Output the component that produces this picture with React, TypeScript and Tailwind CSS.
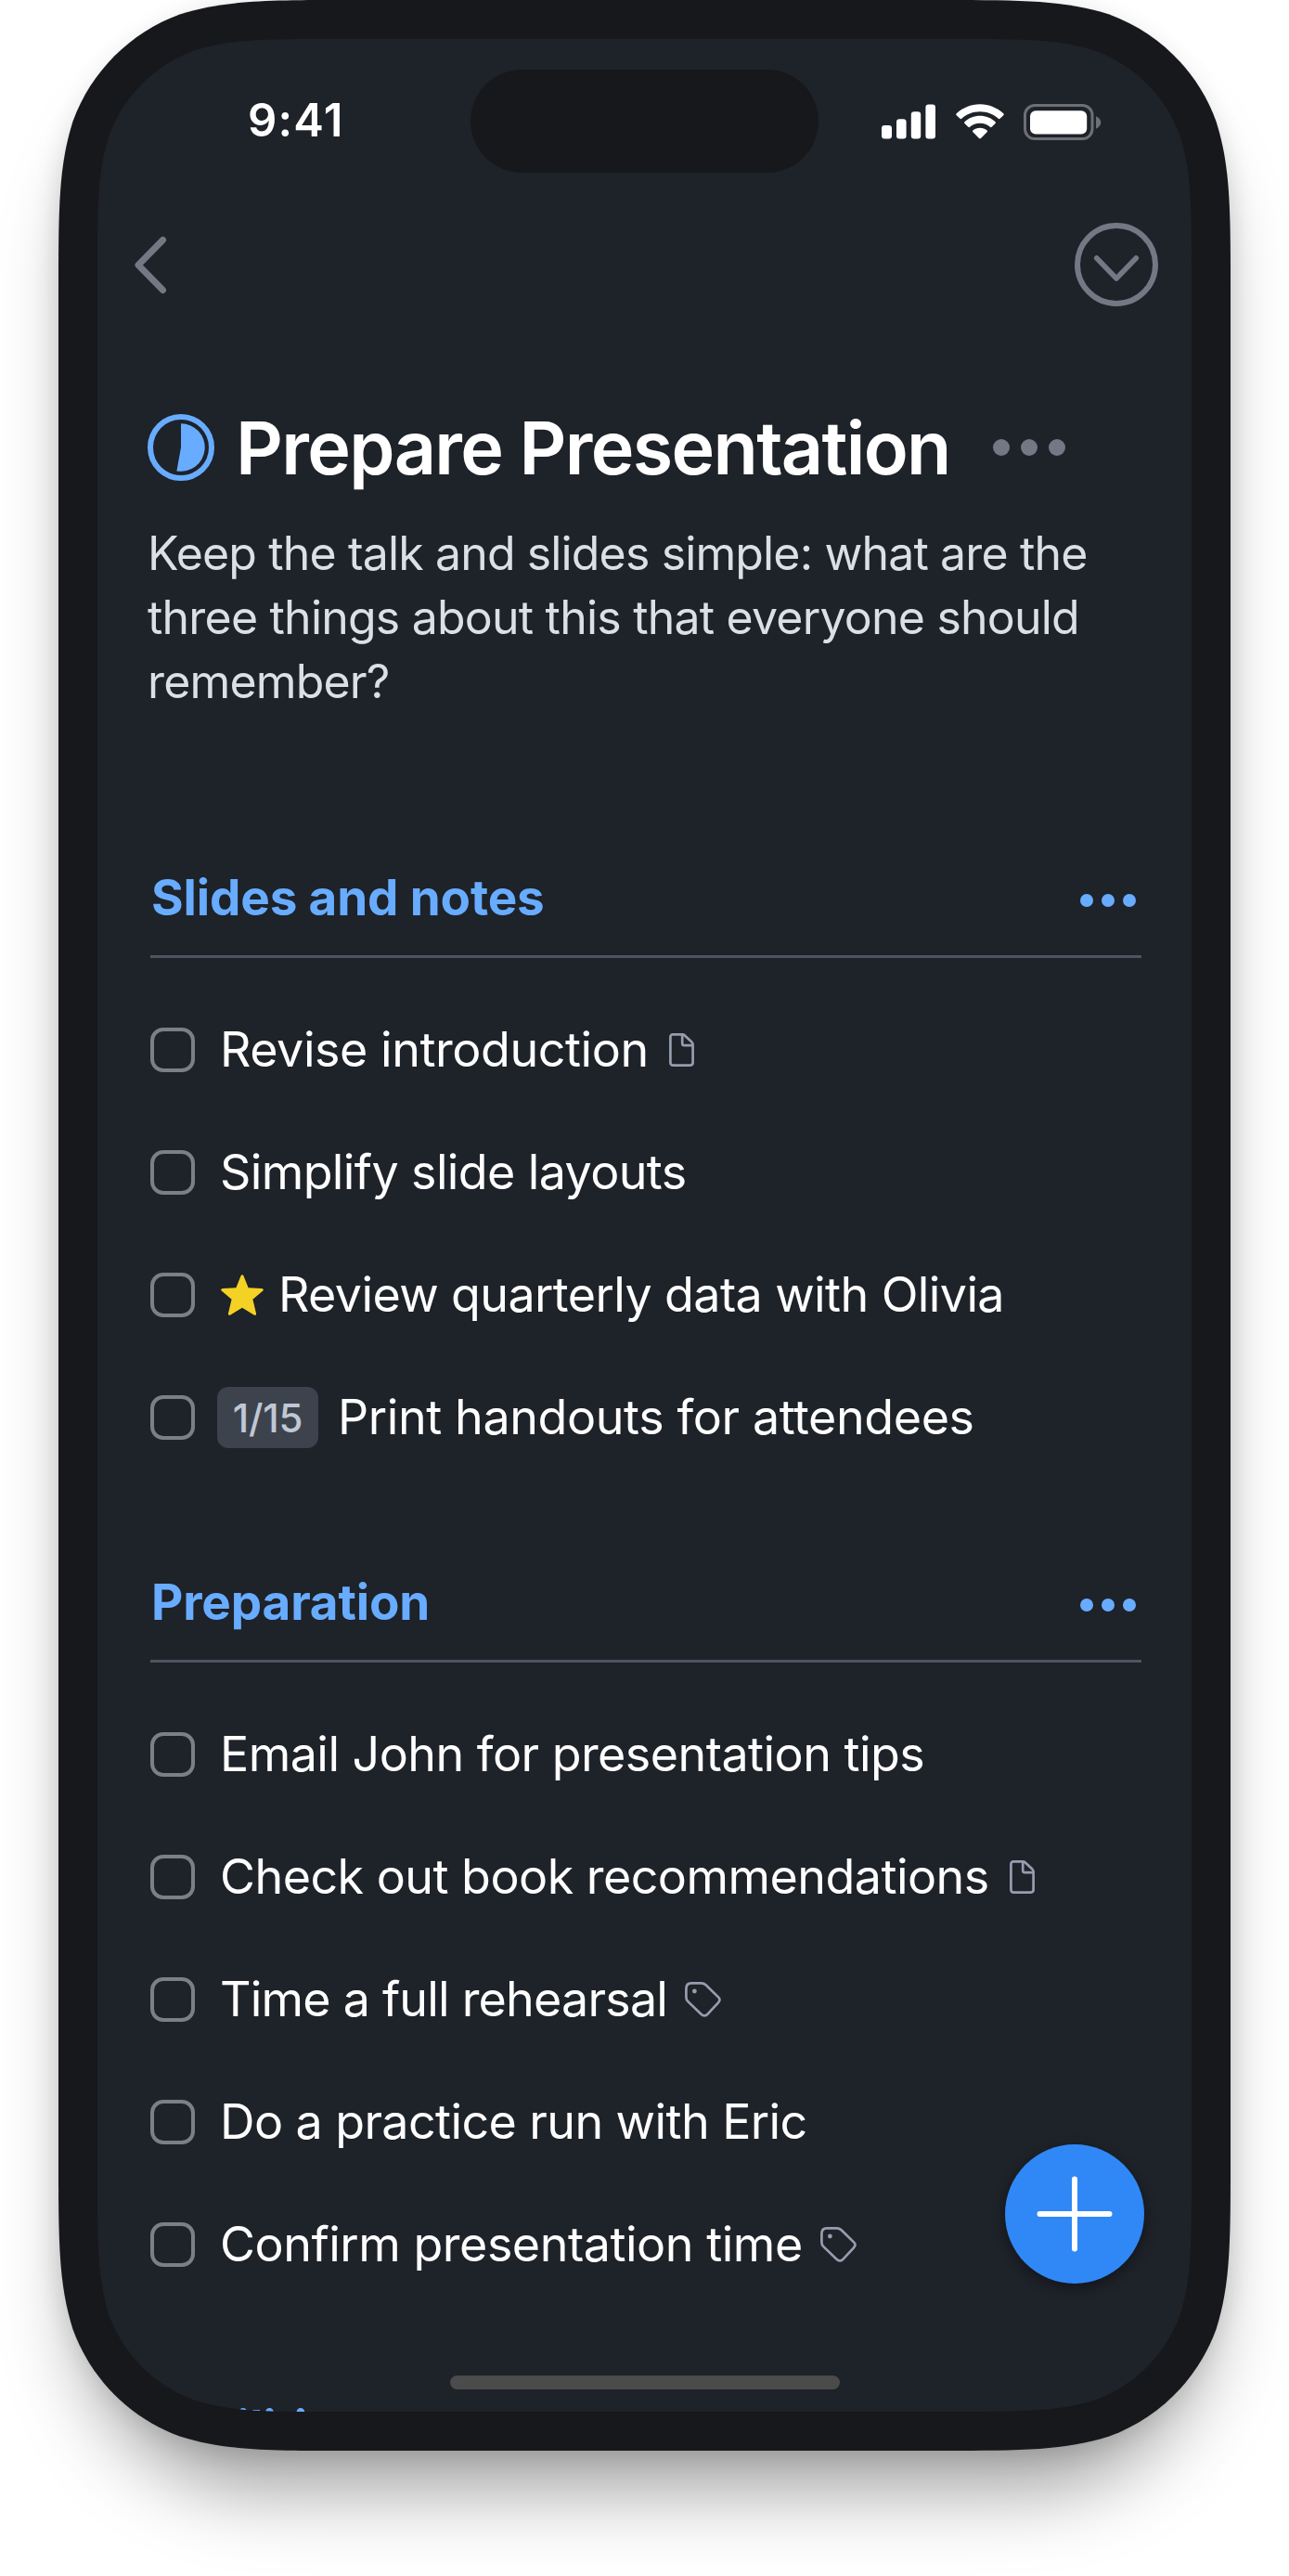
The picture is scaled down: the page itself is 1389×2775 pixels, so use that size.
import type { ReactNode } from "react";

type IconKind = "doc" | "tag";
type Task = {
  text: string;
  fit: string;
  icon?: IconKind;
  star?: boolean;
  badge?: string;
};

const slides: Task[] = [
  { text: "Revise introduction", fit: "tracking-[-0.45px]", icon: "doc" },
  { text: "Simplify slide layouts", fit: "tracking-[-0.62px]" },
  { text: "Review quarterly data with Olivia", fit: "tracking-[-0.61px]", star: true },
  { text: "Print handouts for attendees", fit: "tracking-[-0.41px]", badge: "1/15" },
];

const preparation: Task[] = [
  { text: "Email John for presentation tips", fit: "tracking-[-0.55px]" },
  { text: "Check out book recommendations", fit: "tracking-[-0.54px]", icon: "doc" },
  { text: "Time a full rehearsal", fit: "tracking-[-0.8px]", icon: "tag" },
  { text: "Do a practice run with Eric", fit: "tracking-[-0.6px]" },
  { text: "Confirm presentation time", fit: "tracking-[-0.48px]", icon: "tag" },
];

function DocIcon() {
  return (
    <svg className="ml-[22px] h-9 w-[27px] shrink-0" viewBox="0 0 27 36" fill="none" stroke="#959daf" strokeWidth="2.7" strokeLinejoin="round">
      <path d="M4 1.4H14.5C15.3 1.4 16 1.7 16.6 2.2L24.4 9.6C25.2 10.4 25.6 11.2 25.6 12.2V31.6C25.6 33.4 24.5 34.6 22.8 34.6H4.2C2.5 34.6 1.4 33.4 1.4 31.6V4.2C1.4 2.5 2.4 1.4 4 1.4Z" />
      <path d="M14.2 1.6V11C14.2 12.5 15 13.2 16.3 13.2H25.3" />
    </svg>
  );
}

function TagIcon() {
  return (
    <svg className="ml-[19px] h-[38px] w-[39px] shrink-0" viewBox="0 0 39 38" fill="none" stroke="#959daf" strokeWidth="2.7" strokeLinejoin="round">
      <path d="M7 1.4H17.5C19.6 1.4 21.1 1.9 22.6 3.3L36 16.4C38 18.3 38 20.3 36 22.3L24.6 34.6C22.5 37 19.8 37 17.5 34.8L3.6 21.4C2 19.9 1.4 18.5 1.4 16.4V7.4C1.4 3.5 3.4 1.4 7 1.4Z" />
      <circle cx="10.4" cy="10" r="2.4" fill="#959daf" stroke="none" />
    </svg>
  );
}

function Star() {
  return (
    <svg className="mr-[16px] ml-[1px] h-[44px] w-[46px] shrink-0" viewBox="0 0 46 44" fill="#f4d125">
      <path d="M21.6 1.3C22.2 -0.2 23.8 -0.2 24.4 1.3L29.6 14.2L43.9 15.1C45.9 15.2 46.3 16.7 45 17.8L34.4 26.8L38 41.8C38.4 43.6 37.1 44.3 35.6 43.4L23 35.7L10.4 43.4C8.9 44.3 7.6 43.6 8 41.8L11.6 26.8L1 17.8C-0.3 16.7 0.1 15.2 2.1 15.1L16.4 14.2Z" />
    </svg>
  );
}

function TaskRow({ task }: { task: Task }) {
  return (
    <li className="flex h-[132px] items-center">
      <span className="size-12 shrink-0 rounded-[14px] border-[4.5px] border-[#7b7f88]" />
      <div className="ml-[27px] flex items-center">
        {task.star && <Star />}
        {task.badge && (
          <span className="-ml-[3px] mr-[21px] flex h-[66px] w-[109px] shrink-0 items-center justify-center rounded-[12px] bg-[#3c434d] text-[42px] font-medium tracking-[-0.2px] text-[#c0c7d4]">
            {task.badge}
          </span>
        )}
        <span className={`whitespace-nowrap text-[52px] leading-[64px] text-white ${task.fit}`}>{task.text}</span>
        {task.icon === "doc" && <DocIcon />}
        {task.icon === "tag" && <TagIcon />}
      </div>
    </li>
  );
}

function SectionHead({ children }: { children: ReactNode }) {
  return (
    <header className="flex h-[118px] items-center justify-between border-b-[3px] border-[#4d5560]">
      <h2 className="ml-[1px] pb-[10px] text-[53px] leading-[64px] font-bold tracking-[-0.15px] text-[#68acff]">{children}</h2>
      <div className="mr-[6px] mb-[3px] flex gap-[9.25px]">
        <i className="size-[14px] rounded-full bg-[#68acff]" />
        <i className="size-[14px] rounded-full bg-[#68acff]" />
        <i className="size-[14px] rounded-full bg-[#68acff]" />
      </div>
    </header>
  );
}

export default function App() {
  return (
    <div className="h-[2775px] w-[1389px] overflow-hidden bg-white pl-[63px] font-['Inter','Liberation_Sans',sans-serif]">
      <div className="relative h-[2640px] w-[1263px]">
        <div className="absolute inset-[3px] rounded-[215px] bg-[#17181b] shadow-[0_66px_84px_-22px_rgba(0,0,0,0.38),0_4px_28px_3px_rgba(0,0,0,0.12)]" />
        <div className="relative h-[2640px] w-[1263px] bg-[#17181b] p-[42px] [clip-path:path('M316.4_0H946.6C1037.7_0_1083.2_0_1132.3_15.5C1185.8_35_1228_77.2_1247.5_130.7C1263_179.8_1263_225.3_1263_316.4V2323.6C1263_2414.7_1263_2460.2_1247.5_2509.3C1228_2562.8_1185.8_2605_1132.3_2624.5C1083.2_2640_1037.7_2640_946.6_2640H316.4C225.3_2640_179.8_2640_130.7_2624.5C77.2_2605_35_2562.8_15.5_2509.3C0_2460.2_0_2414.7_0_2323.6V316.4C0_225.3_0_179.8_15.5_130.7C35_77.2_77.2_35_130.7_15.5C179.8_0_225.3_0_316.4_0Z')]">
          <main className="relative h-[2556px] w-[1179px] overflow-hidden bg-[#1e2229] [clip-path:path('M252.2_0H926.8C999.4_0_1035.7_0_1074.8_12.4C1117.5_27.9_1151.1_61.5_1166.6_104.2C1179_143.3_1179_179.6_1179_252.2V2303.8C1179_2376.4_1179_2412.7_1166.6_2451.8C1151.1_2494.5_1117.5_2528.1_1074.8_2543.6C1035.7_2556_999.4_2556_926.8_2556H252.2C179.6_2556_143.3_2556_104.2_2543.6C61.5_2528.1_27.9_2494.5_12.4_2451.8C0_2412.7_0_2376.4_0_2303.8V252.2C0_179.6_0_143.3_12.4_104.2C27.9_61.5_61.5_27.9_104.2_12.4C143.3_0_179.6_0_252.2_0Z')]">
            <div className="flex h-[180px] items-start pt-[33px]">
              <div className="w-[402px] pt-[26px] pl-[162px] text-[49px] leading-[58px] font-semibold tracking-[1.2px] text-white">9:41</div>
              <div className="h-[111px] w-[375px] rounded-full bg-[#17181b]" />
              <svg className="mt-[36px] ml-[67px] h-[42px] w-[240px]" viewBox="949 111 240 42" fill="#fff">
                <rect x="950" y="135" width="11" height="14.5" rx="3.3" />
                <rect x="966" y="128.3" width="10.6" height="21.2" rx="3.3" />
                <rect x="981.8" y="120.3" width="10.4" height="29.2" rx="3.3" />
                <rect x="997.4" y="112.6" width="10.6" height="36.9" rx="3.3" />
                <path d="M1056 112.2C1065.8 112.2 1074.6 116 1081.3 122.3C1081.9 122.9 1081.9 123.6 1081.3 124.2L1077.5 127.8C1077 128.3 1076.3 128.3 1075.7 127.8C1070.4 122.9 1063.6 120.2 1056 120.2C1048.4 120.2 1041.6 122.9 1036.3 127.8C1035.7 128.3 1035 128.3 1034.5 127.8L1030.7 124.2C1030.1 123.6 1030.1 122.9 1030.7 122.3C1037.4 116 1046.2 112.2 1056 112.2Z" />
                <path d="M1056 124.8C1062.4 124.8 1068.1 127.2 1072.5 131.2C1073.1 131.8 1073.1 132.5 1072.5 133.1L1068.7 136.8C1068.1 137.3 1067.5 137.3 1066.9 136.8C1063.9 134.2 1060.2 132.8 1056 132.8C1051.8 132.8 1048.1 134.2 1045.1 136.8C1044.5 137.3 1043.9 137.3 1043.3 136.8L1039.5 133.1C1038.9 132.5 1038.9 131.8 1039.5 131.2C1043.9 127.2 1049.6 124.8 1056 124.8Z" />
                <path d="M1056 137.7C1058.9 137.7 1061.5 138.7 1063.6 140.4C1064.2 140.9 1064.2 141.6 1063.6 142.2L1057 148.9C1056.4 149.5 1055.6 149.5 1055 148.9L1048.4 142.2C1047.8 141.6 1047.8 140.9 1048.4 140.4C1050.5 138.7 1053.1 137.7 1056 137.7Z" />
                <rect x="1104.5" y="113.6" width="72.5" height="36" rx="10.5" fill="none" stroke="#6c6f74" strokeWidth="3" />
                <rect x="1110" y="119.2" width="61.2" height="25.3" rx="6" />
                <path d="M1181 125.3C1184.3 126.7 1186.3 129.2 1186.3 132C1186.3 134.8 1184.3 137.3 1181 138.7Z" fill="#6c6f74" />
              </svg>
            </div>

            <nav className="flex h-[126px] items-center justify-between pr-[36px] pl-[38px]">
              <svg className="h-[64px] w-[40px]" viewBox="0 0 40 64" fill="none" stroke="#737984" strokeWidth="7" strokeLinecap="round" strokeLinejoin="round">
                <path d="M32.5 5.5L6 32.5L32.5 59.5" />
              </svg>
              <svg className="size-[90px]" viewBox="0 0 90 90" fill="none" stroke="#737984" strokeWidth="6" strokeLinecap="round" strokeLinejoin="round">
                <circle cx="45" cy="45" r="42" />
                <path d="M23.7 38L45 60L66.3 38" strokeWidth="5.5" />
              </svg>
            </nav>

            <div className="px-[57px]">
              <div className="mt-[84px] -ml-[3px] flex h-[100px] items-center">
                <svg className="size-[72px] shrink-0" viewBox="0 0 72 72">
                  <circle cx="36" cy="36" r="33" fill="none" stroke="#68acff" strokeWidth="6" />
                  <path d="M36 10.2A25.8 25.8 0 1 1 31.4 61.4L36 36Z" fill="#68acff" />
                </svg>
                <h1 className="ml-[23px] whitespace-nowrap text-[79px] leading-[96px] font-semibold tracking-[-1.68px] text-white">Prepare Presentation</h1>
                <div className="ml-[46.5px] flex gap-[12px]">
                  <i className="size-[18px] rounded-full bg-[#737984]" />
                  <i className="size-[18px] rounded-full bg-[#737984]" />
                  <i className="size-[18px] rounded-full bg-[#737984]" />
                </div>
              </div>
              <p className="mt-[30px] -ml-[3px] whitespace-nowrap text-[50px] leading-[69px] text-[#dcdfe5]">
                <span className="block tracking-[-0.86px]">Keep the talk and slides simple: what are the</span>
                <span className="block tracking-[-0.79px]">three things about this that everyone should</span>
                <span className="block tracking-[-0.85px]">remember?</span>
              </p>

              <section className="mt-[145px] w-[1068px]">
                <SectionHead>Slides and notes</SectionHead>
                <ul className="pt-[33px]">
                  {slides.map((t) => <TaskRow key={t.text} task={t} />)}
                </ul>
              </section>
              <section className="mt-[80px] w-[1068px]">
                <SectionHead>Preparation</SectionHead>
                <ul className="pt-[33px]">
                  {preparation.map((t) => <TaskRow key={t.text} task={t} />)}
                </ul>
              </section>
              <section className="mt-[79px] w-[1068px]">
                <SectionHead>Facilities</SectionHead>
              </section>
            </div>

            <button aria-label="Add task" className="absolute right-[51px] bottom-[138px] flex size-[150px] items-center justify-center rounded-full bg-[#3088f6] shadow-[0_4px_14px_rgba(0,0,0,0.4)]">
              <svg className="size-[82px]" viewBox="0 0 82 82" stroke="#fff" strokeWidth="6" strokeLinecap="round">
                <path d="M41 3.5V78.5M3.5 41H78.5" />
              </svg>
            </button>
            <div className="absolute bottom-[24px] left-[380px] h-[15px] w-[420px] rounded-full bg-[#4b4b4b]" />
          </main>
        </div>
      </div>
    </div>
  );
}
